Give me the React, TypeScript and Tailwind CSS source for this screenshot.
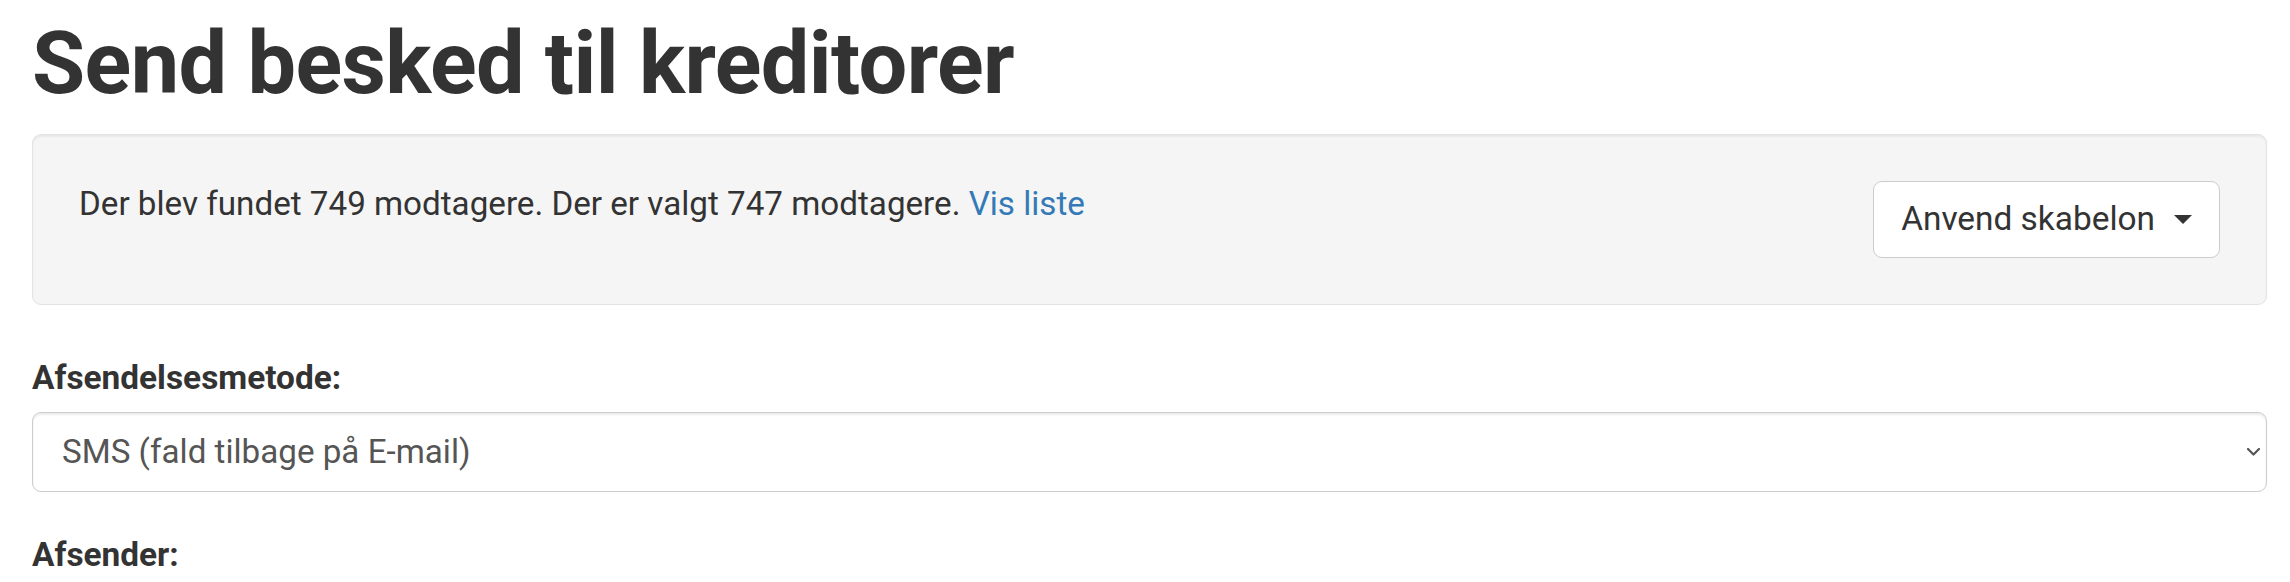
import React from "react";

export default function App() {
  return (
    <div
      className="w-[2290px] h-[582px] overflow-hidden bg-white text-[#333] pl-[32px] pr-[23px]"
      style={{ fontFamily: "Roboto, 'Liberation Sans', sans-serif" }}
    >
      <h1 className="mt-[14px] text-[86.4px] leading-[99px] font-bold tracking-[-0.6px]">
        Send besked til kreditorer
      </h1>

      <div className="mt-[21px] rounded-[9px] border border-[#e3e3e3] bg-[#f5f5f5] p-[46px] shadow-[inset_0_2px_2px_rgba(0,0,0,0.05)] flex items-start justify-between">
        <p className="text-[33.2px] leading-[45px]">
          Der blev fundet 749 modtagere. Der er valgt 747 modtagere.{" "}
          <a className="text-[#337ab7]" href="#">
            Vis liste
          </a>
        </p>
        <button
          type="button"
          className="h-[77px] rounded-[9px] border border-[#ccc] bg-white px-[27px] flex items-center gap-[19px] text-[33.4px] text-[#333]"
        >
          <span>Anvend skabelon</span>
          <svg width="18" height="9" viewBox="0 0 18 9" className="block">
            <path d="M0 0 L18 0 L9 9 Z" fill="#333" />
          </svg>
        </button>
      </div>

      <label className="block mt-[50px] text-[33.4px] leading-[45px] font-bold">
        Afsendelsesmetode:
      </label>
      <div className="mt-[12px] h-[80px] rounded-[9px] border border-[#ccc] bg-white pl-[29px] pr-[6px] flex items-center justify-between shadow-[inset_0_2px_2px_rgba(0,0,0,0.075)]">
        <span className="text-[33.2px] text-[#555]">SMS (fald tilbage på E-mail)</span>
        <svg width="13" height="8" viewBox="0 0 13 8" className="block">
          <path d="M1 1 L6.5 6.5 L12 1" fill="none" stroke="#555" strokeWidth="2.2" strokeLinecap="round" strokeLinejoin="round" />
        </svg>
      </div>

      <label className="block mt-[40px] text-[33.4px] leading-[45px] font-bold">
        Afsender:
      </label>
    </div>
  );
}
